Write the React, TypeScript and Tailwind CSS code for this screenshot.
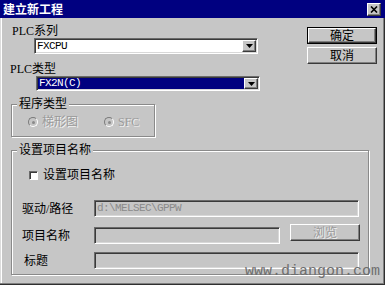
import React from "react";

const ui = "font-['Liberation_Serif','Noto_Sans_CJK_SC',serif]";
const mono = "font-['Liberation_Mono','Noto_Sans_CJK_SC',monospace]";

const sunken =
  "border border-t-[#6a6a6a] border-l-[#6a6a6a] border-b-white border-r-white shadow-[inset_1px_1px_0_#3a3a3a,inset_-1px_-1px_0_#d8d8d8]";
const raised =
  "border border-t-white border-l-white border-b-[#3a3a3a] border-r-[#3a3a3a] shadow-[inset_-1px_-1px_0_#808080]";

const DropButton = () => (
  <div className={`w-[14px] h-full bg-[#c6c6c6] flex items-center justify-center ${raised}`}>
    <svg width="7" height="4" viewBox="0 0 7 4">
      <path d="M0 0h7L3.5 4z" fill="#000" />
    </svg>
  </div>
);

const Combo = ({ value, selected }: { value: string; selected?: boolean }) => (
  <div className={`w-[224px] flex items-stretch bg-white p-[1px] ${sunken}`}>
    <div
      className={`flex-1 flex items-center pl-[1px] text-[11px] tracking-[-0.6px] leading-none ${mono} ${
        selected ? "bg-[#000080] text-white" : "text-black"
      }`}
    >
      {value}
    </div>
    <DropButton />
  </div>
);

const Radio = ({ label, ml }: { label: string; ml: string }) => (
  <div className={`flex items-center ${ml}`}>
    <div className="w-[10px] h-[10px] rounded-full bg-[#c6c6c6] border border-t-[#7a7a7a] border-l-[#7a7a7a] border-b-white border-r-white flex items-center justify-center">
      <div className="w-[3px] h-[3px] rounded-full bg-[#8a8a8a]" />
    </div>
    <span className="ml-[4px] text-[12px] leading-[14px] text-[#9a9a9a] [text-shadow:1px_1px_0_#f2f2f2]">
      {label}
    </span>
  </div>
);

const Button = ({ label, dflt, disabled }: { label: string; dflt?: boolean; disabled?: boolean }) => (
  <div className={`w-[70px] h-[17px] ${dflt ? "border border-black" : ""}`}>
    <div
      className={`w-full h-full flex items-center justify-center text-[12px] leading-none ${raised} ${
        disabled ? "text-[#9a9a9a] [text-shadow:1px_1px_0_#f2f2f2]" : "text-black"
      }`}
    >
      {label}
    </div>
  </div>
);

export default function App() {
  return (
    <div
      className={`relative w-[385px] h-[285px] bg-[#c6c6c6] flex flex-col overflow-hidden ${ui} shadow-[inset_-1px_-1px_0_#303030,inset_-2px_-2px_0_#808080,inset_1px_1px_0_#dcdcdc,inset_2px_2px_0_#fff]`}
    >
      {/* title bar */}
      <div className="h-[18px] bg-[#000080] flex items-center justify-between pl-[3px] pr-[4px]">
        <span className="text-white text-[12px] leading-none font-bold font-['Noto_Sans_CJK_SC',sans-serif]">
          建立新工程
        </span>
        <div className={`w-[14px] h-[13px] bg-[#c6c6c6] flex items-center justify-center ${raised}`}>
          <svg width="8" height="7" viewBox="0 0 8 7">
            <path d="M1 0.5L7 6.5M7 0.5L1 6.5" stroke="#000" strokeWidth="1.6" />
          </svg>
        </div>
      </div>

      {/* top: PLC selection + buttons */}
      <div className="flex items-start">
        <div className="w-[307px] flex flex-col">
          <div className="mt-[6px] pl-[12px] text-[12px] leading-[14px] text-black">PLC系列</div>
          <div className="ml-[34px] h-[16px] flex">
            <Combo value="FXCPU" />
          </div>
          <div className="mt-[8px] pl-[10px] text-[12px] leading-[14px] text-black">PLC类型</div>
          <div className="ml-[36px] h-[15px] flex">
            <Combo value="FX2N(C)" selected />
          </div>
        </div>
        <div className="mt-[9px] flex flex-col gap-[3px]">
          <Button label="确定" dflt />
          <Button label="取消" />
        </div>
      </div>

      {/* program type */}
      <div className="relative ml-[11px] mt-[13px] w-[144px] h-[33px] border border-[#8a8a8a] shadow-[1px_1px_0_#fff,inset_1px_1px_0_#fff] flex items-center pt-[3px]">
        <span className="absolute left-[5px] -top-[8px] px-[2px] bg-[#c6c6c6] text-[12px] leading-[14px] text-black">
          程序类型
        </span>
        <Radio label="梯形图" ml="ml-[16px]" />
        <Radio label="SFC" ml="ml-[26px]" />
      </div>

      {/* project name */}
      <div className="relative ml-[11px] mt-[13px] w-[358px] h-[125px] border border-[#8a8a8a] shadow-[1px_1px_0_#fff,inset_1px_1px_0_#fff] flex flex-col pl-[10px]">
        <span className="absolute left-[5px] -top-[8px] px-[2px] bg-[#c6c6c6] text-[12px] leading-[14px] text-black">
          设置项目名称
        </span>

        <div className="mt-[18px] h-[12px] flex items-center ml-[7px]">
          <div className="w-[9px] h-[9px] bg-white border border-t-[#6a6a6a] border-l-[#6a6a6a] border-b-white border-r-white shadow-[inset_1px_1px_0_#3a3a3a]" />
          <span className="ml-[5px] text-[12px] leading-[14px] text-black">设置项目名称</span>
        </div>

        <div className="mt-[19px] flex items-center h-[17px]">
          <span className="w-[72px] text-[12px] leading-[14px] text-black">驱动/路径</span>
          <div className={`w-[265px] h-[17px] bg-[#c6c6c6] flex items-center pl-[2px] ${sunken}`}>
            <span className={`text-[11px] tracking-[-0.6px] leading-none text-[#8a8a8a] ${mono}`}>
              d:\MELSEC\GPPW
            </span>
          </div>
        </div>

        <div className="mt-[10px] flex items-start h-[17px]">
          <span className="w-[72px] self-center text-[12px] leading-[14px] text-black">项目名称</span>
          <div className={`w-[186px] h-[17px] bg-[#c6c6c6] ${sunken}`} />
          <div className="ml-[10px] -mt-[3px]">
            <Button label="浏览" disabled />
          </div>
        </div>

        <div className="mt-[8px] flex items-center h-[17px]">
          <span className="w-[72px] pl-[2px] text-[12px] leading-[14px] text-black">标题</span>
          <div className={`w-[265px] h-[17px] bg-[#c6c6c6] ${sunken}`} />
        </div>
      </div>

      {/* watermark */}
      <span className={`absolute right-[5px] bottom-[6px] text-[15px] leading-[15px] text-[#6e6e6e] ${mono}`}>
        www.diangon.com
      </span>
    </div>
  );
}
